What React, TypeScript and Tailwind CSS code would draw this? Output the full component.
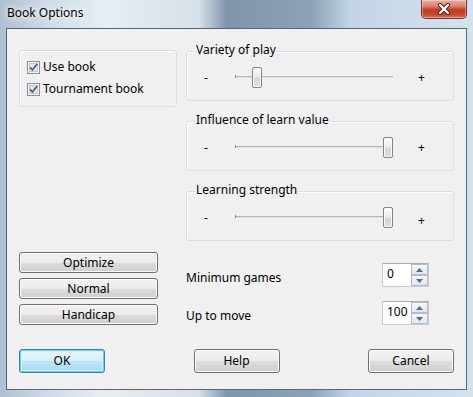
import React from "react";

const FONT = "font-['Noto_Sans','Open_Sans',sans-serif]";

function CloseButton() {
  return (
    <div className="w-[46px] h-[19px] rounded-b-[5px] border border-t-0 border-[#7a3427] bg-[linear-gradient(#eab2a4,#d8826c_35%,#c2391f_55%,#c9462c_80%,#d9735a)] shadow-[inset_0_0_0_1px_rgba(255,255,255,0.35)] flex items-center justify-center">
      <svg width="14" height="12" viewBox="0 0 14 12">
        <path d="M3 2 L11 10 M11 2 L3 10" stroke="#5a1c12" strokeWidth="4.2" strokeLinecap="round" />
        <path d="M3 2 L11 10 M11 2 L3 10" stroke="#ffffff" strokeWidth="2.4" strokeLinecap="round" />
      </svg>
    </div>
  );
}

function CheckBox() {
  return (
    <svg width="13" height="13" viewBox="0 0 13 13">
      <rect x="0.5" y="0.5" width="12" height="12" fill="#f6f6f6" stroke="#8e8f8f" />
      <rect x="2.5" y="2.5" width="8" height="8" fill="#e3e6ea" stroke="#c4c9d0" />
      <path d="M3 6.3 L5.4 9 L10.2 3" stroke="#4a5a82" strokeWidth="1.7" fill="none" />
    </svg>
  );
}

function Slider({ label, pos, low }: { label: string; pos: number; low?: boolean }) {
  return (
    <div className="h-[50px] border border-[#d5dfe5] rounded-[3px] shadow-[inset_1px_1px_0_#fff]">
      <div className="-mt-[10px] ml-[8px] w-fit px-[1px] bg-[#f0f0f0] leading-[16px]">{label}</div>
      <div className="flex items-center mt-[9px] h-[21px] pl-[17px]">
        <span className="w-[31px]">-</span>
        <div className="relative w-[158px] h-[21px]">
          <div className="absolute left-0 right-0 top-[9px] h-[2px] border-t border-[#b4b4b4] bg-[#e4e4e4]" />
          <div className="absolute left-0 top-[8px] w-px h-[3px] bg-[#8a8a8a]" />
          <div
            className="absolute top-0 w-[10px] h-[21px] rounded-[2px] border border-[#858585] bg-[linear-gradient(#fcfcfc,#ececec_45%,#d7d7d7_55%,#dedede)] shadow-[inset_0_0_0_1px_#f8f8f8]"
            style={{ left: pos }}
          />
        </div>
        <span className={low ? "ml-[25px] translate-y-[3px]" : "ml-[25px]"}>+</span>
      </div>
    </div>
  );
}

function Button({ label, primary, className }: { label: string; primary?: boolean; className: string }) {
  return (
    <div
      className={`${className} flex items-center justify-center rounded-[3px] border ${
        primary
          ? "border-[#3c7fb1] bg-[linear-gradient(#e8f6fd,#d8eff9_50%,#bfe4f7_52%,#a9daf3)] shadow-[inset_0_0_0_1px_#5fd2f6,inset_0_0_0_2px_#d7f1fc]"
          : "border-[#707070] bg-[linear-gradient(#f2f2f2,#ebebeb_50%,#dddddd_52%,#cfcfcf)] shadow-[inset_0_0_0_1px_#fbfbfb]"
      }`}
    >
      {label}
    </div>
  );
}

function Arrow({ up }: { up?: boolean }) {
  return (
    <div className="flex-1 flex items-center justify-center border border-[#b3bcc8] bg-[linear-gradient(#f6f8fa,#e0e6ec)]">
      <svg width="7" height="4" viewBox="0 0 7 4">
        <path d={up ? "M0 4 L3.5 0 L7 4 Z" : "M0 0 L3.5 4 L7 0 Z"} fill="#56688c" />
      </svg>
    </div>
  );
}

function SpinBox({ value }: { value: string }) {
  return (
    <div className="w-[47px] h-[24px] flex border border-[#c5cbd3] border-t-[#abadb3] bg-white">
      <div className="flex-1 pl-[4px] leading-[20px]">{value}</div>
      <div className="w-[17px] flex flex-col">
        <Arrow up />
        <Arrow />
      </div>
    </div>
  );
}

export default function App() {
  return (
    <div
      className={`${FONT} text-[12px] text-black w-[473px] h-[397px] overflow-hidden bg-[linear-gradient(90deg,#aebfd0_0%,#cfdbe6_10%,#e7eef3_22%,#d6e0e8_42%,#7e95ab_48%,#8da2b7_66%,#c2d5e6_74%,#d5e2ee_100%)]`}
    >
      <div className="h-[28px] flex items-start justify-between pr-[6px]">
        <div className="pl-[7px] pt-[5px] leading-[16px] [text-shadow:0_0_6px_#fff,0_0_10px_#fff]">Book Options</div>
        <CloseButton />
      </div>
      <div className="ml-[6px] w-[461px] h-[362px] border border-[#56677a] bg-[#f0f0f0] flex flex-col pl-[12px] pt-[21px]">
        <div className="flex items-start">
          <div className="w-[158px] h-[57px] border border-[#d5dfe5] rounded-[3px] shadow-[inset_1px_1px_0_#fff] pl-[7px] pt-[8px] flex flex-col gap-[6px]">
            <div className="h-[16px] flex items-center gap-[3px]">
              <CheckBox />
              <span>Use book</span>
            </div>
            <div className="h-[16px] flex items-center gap-[3px]">
              <CheckBox />
              <span>Tournament book</span>
            </div>
          </div>
          <div className="ml-[9px] mt-[1px] w-[268px] flex flex-col gap-[20px]">
            <Slider label="Variety of play" pos={17} />
            <Slider label="Influence of learn value" pos={148} />
            <Slider label="Learning strength" pos={148} low />
          </div>
        </div>
        <div className="flex items-start mt-[11px]">
          <div className="w-[139px] flex flex-col gap-[5px]">
            <Button label="Optimize" className="h-[21px]" />
            <Button label="Normal" className="h-[21px]" />
            <Button label="Handicap" className="h-[21px]" />
          </div>
          <div className="ml-[28px] mt-[11px] flex flex-col gap-[14px]">
            <div className="flex items-center">
              <span className="w-[196px] pt-[5px]">Minimum games</span>
              <SpinBox value="0" />
            </div>
            <div className="flex items-center">
              <span className="w-[196px] pt-[5px]">Up to move</span>
              <SpinBox value="100" />
            </div>
          </div>
        </div>
        <div className="mt-[24px] w-[435px] flex justify-between">
          <Button label="OK" primary className="w-[86px] h-[24px]" />
          <Button label="Help" className="w-[86px] h-[24px]" />
          <Button label="Cancel" className="w-[86px] h-[24px]" />
        </div>
      </div>
    </div>
  );
}
